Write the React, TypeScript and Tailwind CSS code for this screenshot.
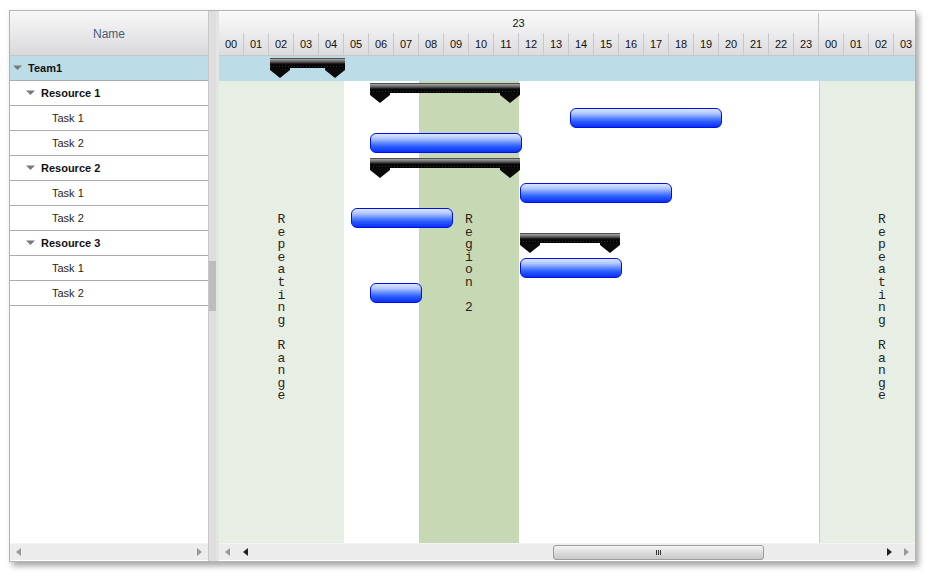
import React from 'react'

const hours = [
  ...Array.from({ length: 24 }, (_, i) => String(i).padStart(2, '0')),
  '00', '01', '02', '03',
]

type Row = { label: string; level: 0 | 1 | 2 }

const rows: Row[] = [
  { label: 'Team1', level: 0 },
  { label: 'Resource 1', level: 1 },
  { label: 'Task 1', level: 2 },
  { label: 'Task 2', level: 2 },
  { label: 'Resource 2', level: 1 },
  { label: 'Task 1', level: 2 },
  { label: 'Task 2', level: 2 },
  { label: 'Resource 3', level: 1 },
  { label: 'Task 1', level: 2 },
  { label: 'Task 2', level: 2 },
]

// bars per row: [left, width] in px from chart start
const bars: ({ kind: 'summary' | 'task'; left: number; width: number } | null)[] = [
  { kind: 'summary', left: 51, width: 75 },
  { kind: 'summary', left: 151, width: 150 },
  { kind: 'task', left: 351, width: 152 },
  { kind: 'task', left: 151, width: 152 },
  { kind: 'summary', left: 151, width: 150 },
  { kind: 'task', left: 301, width: 152 },
  { kind: 'task', left: 132, width: 102 },
  { kind: 'summary', left: 301, width: 100 },
  { kind: 'task', left: 301, width: 102 },
  { kind: 'task', left: 151, width: 52 },
]

function Caret() {
  return (
    <svg width="9" height="6" viewBox="0 0 9 6" className="shrink-0">
      <polygon points="0,0.5 9,0.5 4.5,5" fill="#7a7a7a" />
    </svg>
  )
}

function SummaryBar({ left, width }: { left: number; width: number }) {
  return (
    <svg
      width={width}
      height={21}
      viewBox={`0 0 ${width} 21`}
      className="absolute top-[2px]"
      style={{ left }}
    >
      <defs>
        <linearGradient id="sumg" x1="0" y1="0" x2="0" y2="1">
          <stop offset="0" stopColor="#2a2a2a" />
          <stop offset="0.15" stopColor="#9a9a9a" />
          <stop offset="0.4" stopColor="#5a5a5a" />
          <stop offset="0.6" stopColor="#0a0a0a" />
          <stop offset="1" stopColor="#000" />
        </linearGradient>
      </defs>
      <rect x="0" y="0" width={width} height="10" fill="url(#sumg)" />
      <line x1="0" y1="8.5" x2={width} y2="8.5" stroke="#333" strokeDasharray="1 2" />
      <polygon points="0,10 20,10 20,12 10,20 0,12" fill="#0a0a0a" />
      <polygon
        points={`${width - 20},10 ${width},10 ${width},12 ${width - 10},20 ${width - 20},12`}
        fill="#0a0a0a"
      />
    </svg>
  )
}

function TaskBar({ left, width }: { left: number; width: number }) {
  return (
    <div
      className="absolute top-[2px] h-[20px] rounded-[6px] border border-[#0010e8] bg-[linear-gradient(to_bottom,#dce6ff_0%,#b0c6ff_25%,#6088ff_50%,#2a5cff_70%,#0a30f0_100%)]"
      style={{ left, width }}
    />
  )
}

function VText({ text }: { text: string }) {
  return (
    <div className="flex flex-col items-center font-['Liberation_Mono','Courier_New',monospace] text-[13px] leading-[12.6px] text-[#2a2418]">
      {text.split('').map((c, i) => (
        <span key={i} className="h-[12.6px]">
          {c === ' ' ? '\u00a0' : c}
        </span>
      ))}
    </div>
  )
}

function ArrowL({ dark }: { dark?: boolean }) {
  return (
    <svg width="5" height="8" viewBox="0 0 5 8">
      <polygon points="5,0 5,8 0,4" fill={dark ? '#222' : '#9a9a9a'} />
    </svg>
  )
}

function ArrowR({ dark }: { dark?: boolean }) {
  return (
    <svg width="5" height="8" viewBox="0 0 5 8">
      <polygon points="0,0 0,8 5,4" fill={dark ? '#222' : '#9a9a9a'} />
    </svg>
  )
}

export default function App() {
  return (
    <div className="w-[931px] h-[577px] bg-white pl-[9px] pt-[10px] font-['Liberation_Sans',Arial,sans-serif]">
      <div className="w-[907px] h-[552px] border border-[#b4b4b4] shadow-[3px_4px_6px_rgba(0,0,0,0.35)] flex bg-white overflow-hidden">
        {/* left grid */}
        <div className="w-[198px] flex flex-col">
          <div className="h-[45px] flex items-center justify-center pt-[2px] border-b border-[#c8c8c8] bg-[linear-gradient(to_bottom,#f8f8f8,#e6e6e8_60%,#d9d9dc)] text-[12px] text-[#4a5a78]">
            Name
          </div>
          {rows.map((r, i) => (
            <div
              key={i}
              className={
                'h-[25px] flex items-center border-b border-[#ababab] text-[11px] ' +
                (r.level === 0
                  ? 'bg-[#bcdde8] pl-[3px] font-bold text-[#111]'
                  : r.level === 1
                    ? 'bg-white pl-[16px] font-bold text-[#111]'
                    : 'bg-white pl-[42px] text-[#2b2414]')
              }
            >
              {r.level < 2 && <Caret />}
              <span className={r.level < 2 ? 'ml-[6px]' : ''}>{r.label}</span>
            </div>
          ))}
          <div className="flex-1 bg-white" />
          <div className="h-[17px] bg-[#ececec] border-t border-[#f4f4f4] flex items-center justify-between px-[6px] mb-[1px]">
            <ArrowL />
            <ArrowR />
          </div>
        </div>

        {/* splitter with vertical scrollbar */}
        <div className="w-[8px] flex flex-col bg-[#dedede] border-l border-[#c8c8c8]">
          <div className="h-[250px]" />
          <div className="h-[50px] bg-[#bdbdbd]" />
          <div className="flex-1" />
        </div>

        {/* chart */}
        <div className="flex-1 flex flex-col border-l-[3px] border-l-[#e4e4e4] overflow-hidden">
          <div className="h-[45px] flex flex-col bg-[linear-gradient(to_bottom,#fafafa,#ececee_50%,#dcdcde)] border-b border-[#c8c8c8]">
            <div className="h-[22px] flex text-[11px] text-[#111] pt-[2px]">
              <div className="w-[600px] shrink-0 flex items-center justify-center border-r border-[#c4c4c4]">
                23
              </div>
              <div className="flex-1" />
            </div>
            <div className="h-[23px] flex text-[11px] text-[#111]">
              {hours.map((h, i) => (
                <div
                  key={i}
                  className="w-[25px] shrink-0 flex items-center justify-center border-r border-[#c8c8c8]"
                >
                  {h}
                </div>
              ))}
            </div>
          </div>

          <div className="flex-1 relative overflow-hidden">
            {/* regions */}
            <div className="absolute left-0 top-[25px] bottom-0 w-[125px] bg-[#e7eee3] flex justify-center pt-[133px]">
              <VText text="Repeating Range" />
            </div>
            <div className="absolute left-[200px] top-[25px] bottom-0 w-[100px] bg-[#c7d8b5] flex justify-center pt-[133px]">
              <VText text="Region 2" />
            </div>
            <div className="absolute left-[600px] top-[25px] bottom-0 w-[125px] bg-[#e7eee3] border-l border-[#c8cfc4] flex justify-center pt-[133px]">
              <VText text="Repeating Range" />
            </div>

            {/* rows */}
            <div className="relative flex flex-col">
              {rows.map((r, i) => {
                const b = bars[i]
                return (
                  <div
                    key={i}
                    className={'h-[25px] relative ' + (r.level === 0 ? 'bg-[#bcdde8]' : '')}
                  >
                    {b && b.kind === 'summary' && <SummaryBar left={b.left} width={b.width} />}
                    {b && b.kind === 'task' && <TaskBar left={b.left} width={b.width} />}
                  </div>
                )
              })}
            </div>
          </div>

          <div className="h-[17px] mb-[1px] bg-[#ececec] border-t border-[#f4f4f4] flex items-center">
            <div className="w-[17px] flex justify-center">
              <ArrowL />
            </div>
            <div className="w-[18px] flex justify-center">
              <ArrowL dark />
            </div>
            <div className="w-[299px]" />
            <div className="w-[211px] h-[15px] rounded-[3px] border border-[#9c9c9c] bg-[linear-gradient(to_bottom,#f4f4f4,#dcdcdc_50%,#c8c8c8)] flex items-center justify-center gap-[1px]">
              <span className="w-[1px] h-[5px] bg-[#333]" />
              <span className="w-[1px] h-[5px] bg-[#333]" />
              <span className="w-[1px] h-[5px] bg-[#333]" />
            </div>
            <div className="flex-1" />
            <div className="w-[18px] flex justify-center">
              <ArrowR dark />
            </div>
            <div className="w-[17px] flex justify-center">
              <ArrowR />
            </div>
          </div>
        </div>
      </div>
    </div>
  )
}
